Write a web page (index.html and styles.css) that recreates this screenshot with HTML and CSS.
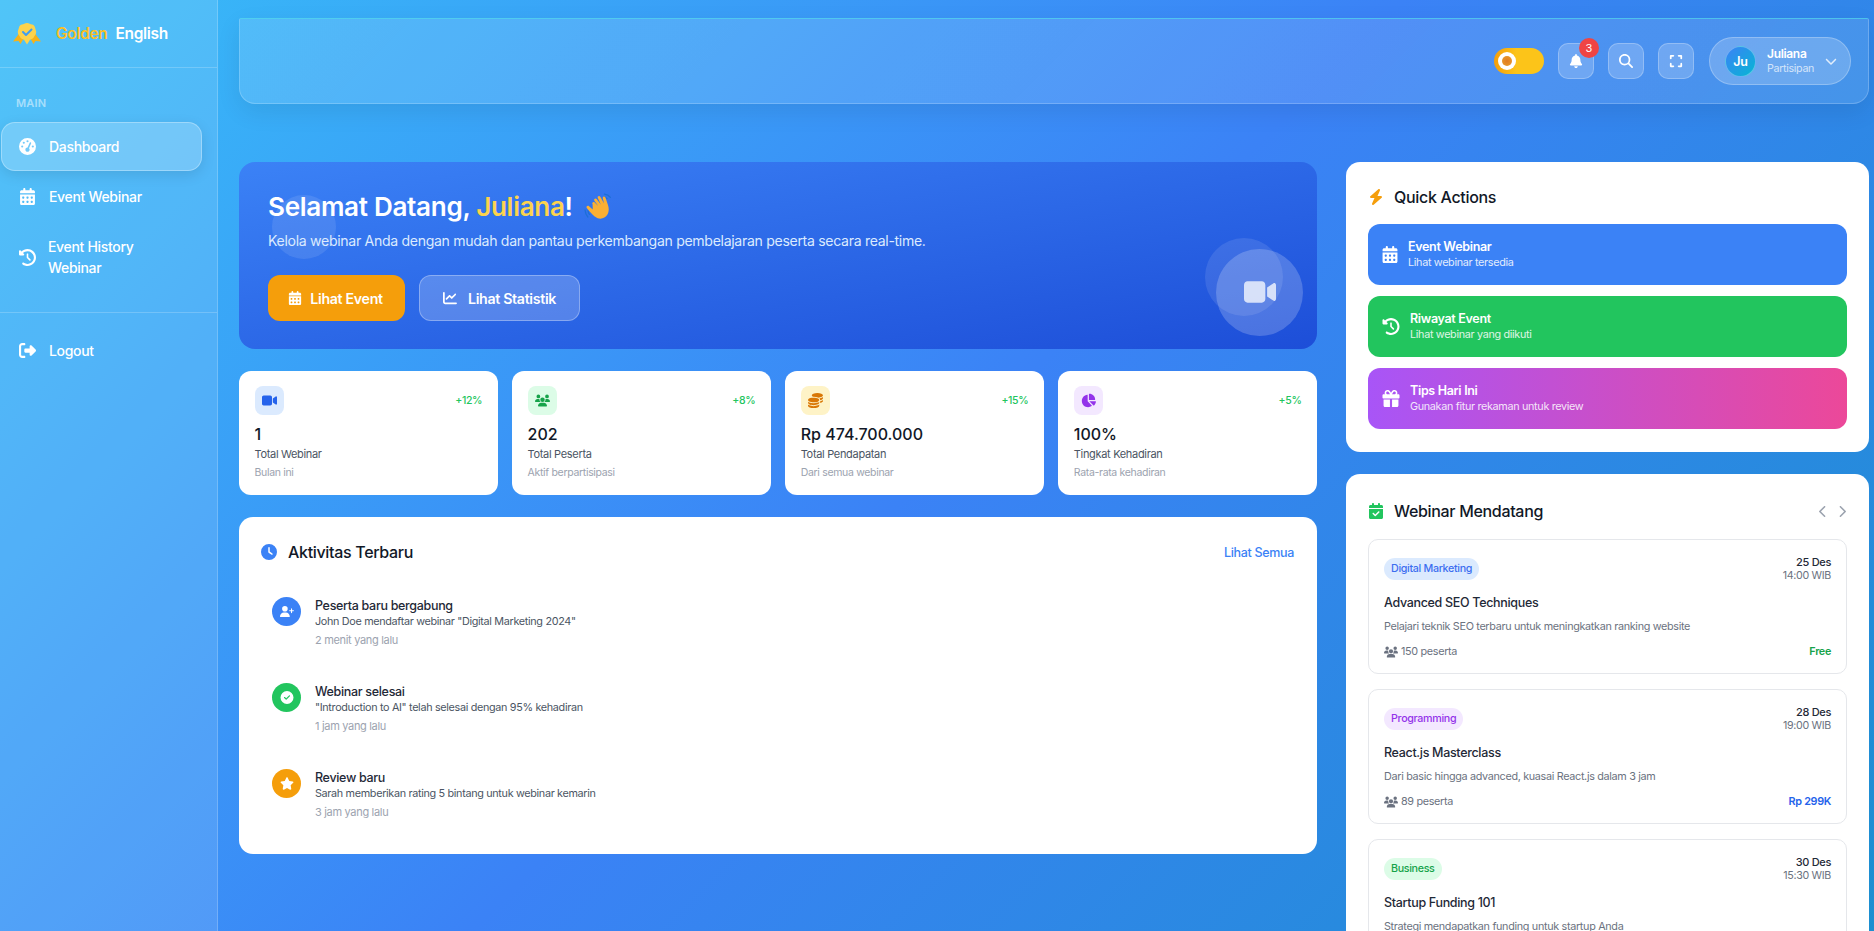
FILE: index.html
```html
<!DOCTYPE html>
<html lang="id">
<head>
    <meta charset="UTF-8">
    <meta name="viewport" content="width=device-width, initial-scale=1.0">
    <title>Golden English - Dashboard</title>
    <link rel="stylesheet" href="styles.css">
</head>
<body>
    <svg class="sprite" xmlns="http://www.w3.org/2000/svg">
        <symbol id="i-gauge" viewBox="0 0 512 512"><path d="M0 256a256 256 0 1 1 512 0A256 256 0 1 1 0 256zM288 96a32 32 0 1 0 -64 0 32 32 0 1 0 64 0zM256 416c35.3 0 64-28.7 64-64c0-17.4-6.9-33.1-18.1-44.6L366 161.7c5.3-12.1-.2-26.3-12.3-31.6s-26.3 .2-31.6 12.3L257.9 288c-.6 0-1.3 0-1.9 0c-35.3 0-64 28.7-64 64s28.7 64 64 64zM176 144a32 32 0 1 0 -64 0 32 32 0 1 0 64 0zM96 288a32 32 0 1 0 0-64 32 32 0 1 0 0 64zm352-32a32 32 0 1 0 -64 0 32 32 0 1 0 64 0z"/></symbol>
        <symbol id="i-calendar" viewBox="0 0 448 512"><path d="M128 0c17.7 0 32 14.3 32 32V64H288V32c0-17.7 14.3-32 32-32s32 14.3 32 32V64h48c26.5 0 48 21.5 48 48v48H0V112C0 85.5 21.5 64 48 64H96V32c0-17.7 14.3-32 32-32zM0 192H448V464c0 26.5-21.5 48-48 48H48c-26.5 0-48-21.5-48-48V192zm64 80v32c0 8.8 7.2 16 16 16h32c8.8 0 16-7.2 16-16V272c0-8.8-7.2-16-16-16H80c-8.8 0-16 7.2-16 16zm128 0v32c0 8.8 7.2 16 16 16h32c8.8 0 16-7.2 16-16V272c0-8.8-7.2-16-16-16H208c-8.8 0-16 7.2-16 16zm144-16c-8.8 0-16 7.2-16 16v32c0 8.8 7.2 16 16 16h32c8.8 0 16-7.2 16-16V272c0-8.8-7.2-16-16-16H336zM64 400v32c0 8.8 7.2 16 16 16h32c8.8 0 16-7.2 16-16V400c0-8.8-7.2-16-16-16H80c-8.8 0-16 7.2-16 16zm144-16c-8.8 0-16 7.2-16 16v32c0 8.8 7.2 16 16 16h32c8.8 0 16-7.2 16-16V400c0-8.8-7.2-16-16-16H208zm112 16v32c0 8.8 7.2 16 16 16h32c8.8 0 16-7.2 16-16V400c0-8.8-7.2-16-16-16H336c-8.8 0-16 7.2-16 16z"/></symbol>
        <symbol id="i-history" viewBox="0 0 512 512"><path d="M75 75L41 41C25.9 25.9 0 36.6 0 57.9V168c0 13.3 10.7 24 24 24H134.1c21.4 0 32.1-25.9 17-41l-30.8-30.8C155 85.5 203 64 256 64c106 0 192 86 192 192s-86 192-192 192c-40.8 0-78.6-12.7-109.7-34.4c-14.5-10.1-34.4-6.6-44.6 7.9s-6.6 34.4 7.9 44.6C151.2 495 201.7 512 256 512c141.4 0 256-114.6 256-256S397.4 0 256 0C185.3 0 121.3 28.7 75 75zm181 53c-13.3 0-24 10.7-24 24V256c0 6.4 2.5 12.5 7 17l72 72c9.4 9.4 24.6 9.4 33.9 0s9.4-24.6 0-33.9l-65-65V152c0-13.3-10.7-24-24-24z"/></symbol>
        <symbol id="i-logout" viewBox="0 0 512 512"><path d="M377.9 105.9L500.7 228.7c7.2 7.2 11.3 17.1 11.3 27.3s-4.1 20.1-11.3 27.3L377.9 406.1c-6.4 6.4-15 9.9-24 9.9c-18.7 0-33.9-15.2-33.9-33.9l0-62.1-128 0c-17.7 0-32-14.3-32-32l0-64c0-17.7 14.3-32 32-32l128 0 0-62.1c0-18.7 15.2-33.9 33.9-33.9c9 0 17.6 3.6 24 9.9zM160 96L96 96c-17.7 0-32 14.3-32 32l0 256c0 17.7 14.3 32 32 32l64 0c17.7 0 32 14.3 32 32s-14.3 32-32 32l-64 0c-53 0-96-43-96-96L0 128C0 75 43 32 96 32l64 0c17.7 0 32 14.3 32 32s-14.3 32-32 32z"/></symbol>
        <symbol id="i-bell" viewBox="0 0 448 512"><path d="M224 0c-17.7 0-32 14.3-32 32V51.2C119 66 64 130.6 64 208v18.8c0 47-17.3 92.4-48.5 127.6l-7.4 8.3c-8.4 9.4-10.4 22.9-5.3 34.4S19.4 416 32 416H416c12.6 0 24-7.4 29.2-18.9s3.1-25-5.3-34.4l-7.4-8.3C401.3 319.2 384 273.9 384 226.8V208c0-77.4-55-142-128-156.8V32c0-17.7-14.3-32-32-32zm45.3 493.3c12-12 18.7-28.3 18.7-45.3H224 160c0 17 6.7 33.3 18.7 45.3s28.3 18.7 45.3 18.7s33.3-6.7 45.3-18.7z"/></symbol>
        <symbol id="i-search" viewBox="0 0 512 512"><path d="M416 208c0 45.9-14.9 88.3-40 122.7L502.6 457.4c12.5 12.5 12.5 32.8 0 45.3s-32.8 12.5-45.3 0L330.7 376c-34.4 25.2-76.8 40-122.7 40C93.1 416 0 322.9 0 208S93.1 0 208 0S416 93.1 416 208zM208 352a144 144 0 1 0 0-288 144 144 0 1 0 0 288z"/></symbol>
        <symbol id="i-expand" viewBox="0 0 448 512"><path d="M32 32C14.3 32 0 46.3 0 64v96c0 17.7 14.3 32 32 32s32-14.3 32-32V96h64c17.7 0 32-14.3 32-32s-14.3-32-32-32H32zM64 352c0-17.7-14.3-32-32-32s-32 14.3-32 32v96c0 17.7 14.3 32 32 32h96c17.7 0 32-14.3 32-32s-14.3-32-32-32H64V352zM320 32c-17.7 0-32 14.3-32 32s14.3 32 32 32h64v64c0 17.7 14.3 32 32 32s32-14.3 32-32V64c0-17.7-14.3-32-32-32H320zM448 352c0-17.7-14.3-32-32-32s-32 14.3-32 32v64H320c-17.7 0-32 14.3-32 32s14.3 32 32 32h96c17.7 0 32-14.3 32-32V352z"/></symbol>
        <symbol id="i-down" viewBox="0 0 512 512"><path d="M233.4 406.6c12.5 12.5 32.8 12.5 45.3 0l192-192c12.5-12.5 12.5-32.8 0-45.3s-32.8-12.5-45.3 0L256 338.7 86.6 169.4c-12.5-12.5-32.8-12.5-45.3 0s-12.5 32.8 0 45.3l192 192z"/></symbol>
        <symbol id="i-left" viewBox="0 0 320 512"><path d="M9.4 233.4c-12.5 12.5-12.5 32.8 0 45.3l192 192c12.5 12.5 32.8 12.5 45.3 0s12.5-32.8 0-45.3L77.3 256 246.6 86.6c12.5-12.5 12.5-32.8 0-45.3s-32.8-12.5-45.3 0l-192 192z"/></symbol>
        <symbol id="i-right" viewBox="0 0 320 512"><path d="M310.6 233.4c12.5 12.5 12.5 32.8 0 45.3l-192 192c-12.5 12.5-32.8 12.5-45.3 0s-12.5-32.8 0-45.3L242.7 256 73.4 86.6c-12.5-12.5-12.5-32.8 0-45.3s32.8-12.5 45.3 0l192 192z"/></symbol>
        <symbol id="i-chart" viewBox="0 0 512 512"><path d="M64 64c0-17.7-14.3-32-32-32S0 46.3 0 64V400c0 44.2 35.8 80 80 80H480c17.7 0 32-14.3 32-32s-14.3-32-32-32H80c-8.8 0-16-7.2-16-16V64zm406.6 86.6c12.5-12.5 12.5-32.8 0-45.3s-32.8-12.5-45.3 0L320 210.7l-57.4-57.4c-12.5-12.5-32.8-12.5-45.3 0l-112 112c-12.5 12.5-12.5 32.8 0 45.3s32.8 12.5 45.3 0L240 221.3l57.4 57.4c12.5 12.5 32.8 12.5 45.3 0l128-128z"/></symbol>
        <symbol id="i-video" viewBox="0 0 576 512"><path d="M0 128C0 92.7 28.7 64 64 64H320c35.3 0 64 28.7 64 64V384c0 35.3-28.7 64-64 64H64c-35.3 0-64-28.7-64-64V128zM559.1 99.8c10.4 5.6 16.9 16.4 16.9 28.2V384c0 11.8-6.5 22.6-16.9 28.2s-23 5-32.9-1.6l-96-64L416 337.1V320 192 174.9l14.2-9.5 96-64c9.8-6.5 22.4-7.2 32.9-1.6z"/></symbol>
        <symbol id="i-users" viewBox="0 0 640 512"><path d="M144 0a80 80 0 1 1 0 160A80 80 0 1 1 144 0zM512 0a80 80 0 1 1 0 160A80 80 0 1 1 512 0zM0 298.7C0 239.8 47.8 192 106.7 192h42.7c15.9 0 31 3.5 44.6 9.7c-1.3 7.2-1.9 14.7-1.9 22.3c0 38.2 16.8 72.5 43.3 96c-.2 0-.4 0-.7 0H21.3C9.6 320 0 310.4 0 298.7zM405.3 320c-.2 0-.4 0-.7 0c26.6-23.5 43.3-57.8 43.3-96c0-7.6-.7-15-1.9-22.3c13.6-6.3 28.7-9.7 44.6-9.7h42.7C592.2 192 640 239.8 640 298.7c0 11.8-9.6 21.3-21.3 21.3H405.3zM224 224a96 96 0 1 1 192 0 96 96 0 1 1 -192 0zM128 485.3C128 411.7 187.7 352 261.3 352H378.7C452.3 352 512 411.7 512 485.3c0 14.7-11.9 26.7-26.7 26.7H154.7c-14.7 0-26.7-11.9-26.7-26.7z"/></symbol>
        <symbol id="i-coins" viewBox="0 0 512 512"><path d="M512 80c0 18-14.3 34.6-38.4 48c-29.1 16.1-72.5 27.5-122.3 30.9c-3.7-1.8-7.4-3.5-11.3-5C300.6 137.4 248.2 128 192 128c-8.3 0-16.4 .2-24.5 .6l-1.1-.6C142.3 114.6 128 98 128 80c0-44.2 86-80 192-80S512 35.8 512 80zM160.7 161.1c10.2-.7 20.7-1.1 31.3-1.1c62.2 0 117.4 12.3 152.5 31.4C369.3 204.9 384 221.7 384 240c0 4-.7 7.9-2.1 11.7c-4.6 13.2-17 25.3-35 35.5c0 0 0 0 0 0c-.1 .1-.3 .1-.4 .2l0 0 0 0c-.3 .2-.6 .3-.9 .5c-35 19.4-90.8 32-153.6 32c-59.6 0-112.9-11.3-148.2-29.1c-1.9-.9-3.7-1.9-5.5-2.9C14.3 274.6 0 258 0 240c0-34.8 53.4-64.5 128-75.4c10.5-1.5 21.4-2.7 32.7-3.5zM416 240c0-21.9-10.6-39.9-24.1-53.4c28.3-4.4 54.2-11.4 76.2-20.5c16.3-6.8 31.5-15.2 43.9-25.5V176c0 19.3-16.5 37.1-43.8 50.9c-14.6 7.4-32.4 13.7-52.4 18.5c.1-1.8 .2-3.5 .2-5.3zm-32 96c0 18-14.3 34.6-38.4 48c-1.8 1-3.6 1.9-5.5 2.9C304.9 404.7 251.6 416 192 416c-62.8 0-118.6-12.6-153.6-32C14.3 370.6 0 354 0 336V300.6c12.5 10.3 27.6 18.7 43.9 25.5C83.4 342.6 135.8 352 192 352s108.6-9.4 148.1-25.9c7.8-3.2 15.3-6.9 22.4-10.9c6.1-3.4 11.8-7.2 17.2-11.2c1.5-1.1 2.9-2.3 4.3-3.4V304v5.7V336zm32 0V304 278.1c19-4.2 36.5-9.5 52.1-16c16.3-6.8 31.5-15.2 43.9-25.5V272c0 10.5-5 21-14.9 30.9c-16.3 16.3-45 29.7-81.3 38.4c.1-1.7 .2-3.5 .2-5.3zM192 448c56.2 0 108.6-9.4 148.1-25.9c16.3-6.8 31.5-15.2 43.9-25.5V432c0 44.2-86 80-192 80S0 476.2 0 432V396.6c12.5 10.3 27.6 18.7 43.9 25.5C83.4 438.6 135.8 448 192 448z"/></symbol>
        <symbol id="i-pie" viewBox="0 0 576 512"><path d="M304 240V16.6c0-9 7-16.6 16-16.6C443.7 0 544 100.3 544 224c0 9-7.6 16-16.6 16H304zM32 272C32 150.7 122.1 50.3 239 34.3c9.2-1.3 17 6.1 17 15.4V288L412.5 444.5c6.7 6.7 6.2 17.7-1.5 23.1C371.8 495.6 323.8 512 272 512C139.5 512 32 404.6 32 272zm526.4 16c9.3 0 16.6 7.8 15.4 17c-7.7 55.9-34.6 105.6-73.9 142.3c-6 5.6-15.4 5.2-21.2-.7L320 288H558.4z"/></symbol>
        <symbol id="i-clock" viewBox="0 0 512 512"><path d="M256 0a256 256 0 1 1 0 512A256 256 0 1 1 256 0zM232 120V256c0 8 4 15.5 10.7 20l96 64c11 7.4 25.9 4.4 33.3-6.7s4.4-25.9-6.7-33.3L280 243.2V120c0-13.3-10.7-24-24-24s-24 10.7-24 24z"/></symbol>
        <symbol id="i-userplus" viewBox="0 0 640 512"><path d="M96 128a128 128 0 1 1 256 0A128 128 0 1 1 96 128zM0 482.3C0 383.8 79.8 304 178.3 304h91.4C368.2 304 448 383.8 448 482.3c0 16.4-13.3 29.7-29.7 29.7H29.7C13.3 512 0 498.7 0 482.3zM504 312V248H440c-13.3 0-24-10.7-24-24s10.7-24 24-24h64V136c0-13.3 10.7-24 24-24s24 10.7 24 24v64h64c13.3 0 24 10.7 24 24s-10.7 24-24 24H552v64c0 13.3-10.7 24-24 24s-24-10.7-24-24z"/></symbol>
        <symbol id="i-check" viewBox="0 0 512 512"><path d="M256 512A256 256 0 1 0 256 0a256 256 0 1 0 0 512zM369 209L241 337c-9.4 9.4-24.6 9.4-33.9 0l-64-64c-9.4-9.4-9.4-24.6 0-33.9s24.6-9.4 33.9 0l47 47L335 175c9.4-9.4 24.6-9.4 33.9 0s9.4 24.6 0 33.9z"/></symbol>
        <symbol id="i-star" viewBox="0 0 576 512"><path d="M316.9 18C311.6 7 300.4 0 288.1 0s-23.4 7-28.8 18L195 150.3 51.4 171.5c-12 1.8-22 10.2-25.7 21.7s-.7 24.2 7.9 32.7L137.8 329 113.2 474.7c-2 12 3 24.2 12.9 31.3s23 8 33.8 2.3l128.3-68.5 128.3 68.5c10.8 5.7 23.9 4.9 33.8-2.3s14.9-19.3 12.9-31.3L438.5 329 542.7 225.9c8.6-8.5 11.7-21.2 7.9-32.7s-13.7-19.9-25.7-21.7L381.2 150.3 316.9 18z"/></symbol>
        <symbol id="i-bolt" viewBox="0 0 448 512"><path d="M349.4 44.6c5.9-13.7 1.5-29.7-10.6-38.5s-28.6-8-39.9 1.8l-256 224c-10 8.8-13.6 22.9-8.9 35.3S50.7 288 64 288H175.5L98.6 467.4c-5.9 13.7-1.5 29.7 10.6 38.5s28.6 8 39.9-1.8l256-224c10-8.8 13.6-22.9 8.9-35.3s-16.6-20.7-30-20.7H272.5L349.4 44.6z"/></symbol>
        <symbol id="i-gift" viewBox="0 0 512 512"><path d="M190.5 68.8L225.3 128H224 152c-22.1 0-40-17.9-40-40s17.9-40 40-40h2.2c14.9 0 28.8 7.9 36.3 20.8zM64 88c0 14.4 3.5 28 9.6 40H32c-17.7 0-32 14.3-32 32v64c0 17.7 14.3 32 32 32H480c17.7 0 32-14.3 32-32V160c0-17.7-14.3-32-32-32H438.4c6.1-12 9.6-25.6 9.6-40c0-48.6-39.4-88-88-88h-2.2c-31.9 0-61.5 16.9-77.7 44.4L256 85.5l-24.1-41C215.7 16.9 186.1 0 154.2 0H152C103.4 0 64 39.4 64 88zm336 0c0 22.1-17.9 40-40 40H288h-1.3l34.8-59.2C329.1 55.9 342.9 48 357.8 48H360c22.1 0 40 17.9 40 40zM32 288V464c0 26.5 21.5 48 48 48H224V288H32zM288 512H432c26.5 0 48-21.5 48-48V288H288V512z"/></symbol>
        <symbol id="i-calcheck" viewBox="0 0 448 512"><path d="M128 0c17.7 0 32 14.3 32 32V64H288V32c0-17.7 14.3-32 32-32s32 14.3 32 32V64h48c26.5 0 48 21.5 48 48v48H0V112C0 85.5 21.5 64 48 64H96V32c0-17.7 14.3-32 32-32zM0 192H448V464c0 26.5-21.5 48-48 48H48c-26.5 0-48-21.5-48-48V192zM329 305c9.4-9.4 9.4-24.6 0-33.9s-24.6-9.4-33.9 0l-95 95-47-47c-9.4-9.4-24.6-9.4-33.9 0s-9.4 24.6 0 33.9l64 64c9.4 9.4 24.6 9.4 33.9 0L329 305z"/></symbol>
    </svg>

    <aside class="sidebar">
        <div class="brand">
            <svg class="brand-logo" viewBox="0 0 28 22">
                <path fill="#f5b21a" d="M6.500 10L0 18.500l5.500-.5 2 3 4-7zM21.500 10L28 18.500l-5.500-.5-2 3-4-7z"/>
                <path fill="#fcd34d" d="M14 0c2 0 3.500 1.300 5 1.500 1.500.2 2.800 1.500 3 3 .2 1.500 1.200 2.800 1.200 4.500 0 2-1.500 3.500-2.200 5-.7 1.500-2.500 2.300-4 2.800L14 21.500 11 16.800c-1.500-.5-3.300-1.300-4-2.800-.7-1.500-2.200-3-2.200-5 0-1.700 1-3 1.200-4.500.2-1.500 1.500-2.800 3-3C10.500 1.300 12 0 14 0z"/>
                <path fill="none" stroke="#3f9df2" stroke-width="2" stroke-linecap="round" stroke-linejoin="round" d="M10 9l3 3 5.500-5.500"/>
            </svg>
            <span class="brand-gold">Golden</span>
            <span class="brand-white">English</span>
        </div>
        <div class="nav-title">MAIN</div>
        <nav class="nav">
            <a class="nav-item active"><svg class="nav-icon"><use href="#i-gauge"/></svg><span>Dashboard</span></a>
            <a class="nav-item"><svg class="nav-icon"><use href="#i-calendar"/></svg><span>Event Webinar</span></a>
            <a class="nav-item two-line"><svg class="nav-icon"><use href="#i-history"/></svg><span>Event History<br>Webinar</span></a>
        </nav>
        <div class="nav-bottom">
            <a class="nav-item"><svg class="nav-icon"><use href="#i-logout"/></svg><span>Logout</span></a>
        </div>
    </aside>

    <main class="main">
        <header class="topbar">
            <div class="toggle"><span class="knob"><span class="sun"></span></span></div>
            <button class="top-btn"><svg class="top-icon"><use href="#i-bell"/></svg><span class="badge">3</span></button>
            <button class="top-btn"><svg class="top-icon"><use href="#i-search"/></svg></button>
            <button class="top-btn"><svg class="top-icon"><use href="#i-expand"/></svg></button>
            <div class="user-pill">
                <span class="avatar">Ju</span>
                <span class="user-text"><b>Juliana</b><small>Partisipan</small></span>
                <svg class="user-chevron"><use href="#i-down"/></svg>
            </div>
        </header>

        <div class="content">
            <div class="col-left">
                <section class="hero">
                    <span class="bubble bubble-a"></span>
                    <span class="bubble bubble-b"></span>
                    <span class="bubble bubble-c"></span>
                    <svg class="hero-video"><use href="#i-video"/></svg>
                    <h1>Selamat Datang, <span class="hero-name">Juliana</span>!<svg class="wave" viewBox="0 0 28 28"><path fill="none" stroke="#1d6fd6" stroke-width="1.2" stroke-linecap="round" d="M1 16c.2 2.500 1 4.600 2.600 6.400M3.800 16.500c.1 1.300.5 2.400 1.300 3.400M19 1c2.300.2 4.200 1.200 5.600 3M18.500 3.600c1.200.2 2.200.7 3 1.600"/><path fill="#fbb034" d="M8 10.500c-1-1.300 .8-2.700 2-1.600l3.300 3.300-3.600-5c-1-1.500 1-2.900 2.100-1.500l3.900 5-2.800-6c-.8-1.600 1.400-2.700 2.300-1.200l3.500 6.200-1.200-4.700c-.4-1.700 1.900-2.300 2.500-.7l2.300 6.700c1.100 3.400 1.200 6.200-.4 9.100-2.400 4.200-7.800 5-11.500 2.100-1.800-1.400-5.700-5.600-7.700-8-1.200-1.500.7-3 2-1.900l3.500 3.200z"/></svg></h1>
                    <p>Kelola webinar Anda dengan mudah dan pantau perkembangan pembelajaran peserta secara real-time.</p>
                    <div class="hero-actions">
                        <a class="btn btn-amber"><svg class="btn-icon"><use href="#i-calendar"/></svg>Lihat Event</a>
                        <a class="btn btn-ghost"><svg class="btn-icon"><use href="#i-chart"/></svg>Lihat Statistik</a>
                    </div>
                </section>

                <section class="stats">
                    <div class="stat">
                        <div class="stat-top"><span class="stat-icon bg-blue"><svg class="stat-svg"><use href="#i-video"/></svg></span><span class="stat-trend">+12%</span></div>
                        <div class="stat-value">1</div>
                        <div class="stat-label">Total Webinar</div>
                        <div class="stat-note">Bulan ini</div>
                    </div>
                    <div class="stat">
                        <div class="stat-top"><span class="stat-icon bg-green"><svg class="stat-svg"><use href="#i-users"/></svg></span><span class="stat-trend">+8%</span></div>
                        <div class="stat-value">202</div>
                        <div class="stat-label">Total Peserta</div>
                        <div class="stat-note">Aktif berpartisipasi</div>
                    </div>
                    <div class="stat">
                        <div class="stat-top"><span class="stat-icon bg-amber"><svg class="stat-svg"><use href="#i-coins"/></svg></span><span class="stat-trend">+15%</span></div>
                        <div class="stat-value">Rp 474.700.000</div>
                        <div class="stat-label">Total Pendapatan</div>
                        <div class="stat-note">Dari semua webinar</div>
                    </div>
                    <div class="stat">
                        <div class="stat-top"><span class="stat-icon bg-purple"><svg class="stat-svg"><use href="#i-pie"/></svg></span><span class="stat-trend">+5%</span></div>
                        <div class="stat-value">100%</div>
                        <div class="stat-label">Tingkat Kehadiran</div>
                        <div class="stat-note">Rata-rata kehadiran</div>
                    </div>
                </section>

                <section class="card activity">
                    <div class="card-head">
                        <h2><svg class="head-icon c-blue"><use href="#i-clock"/></svg>Aktivitas Terbaru</h2>
                        <a class="see-all">Lihat Semua</a>
                    </div>
                    <div class="act-list">
                        <div class="act">
                            <span class="act-icon fill-blue"><svg class="act-svg"><use href="#i-userplus"/></svg></span>
                            <div>
                                <div class="act-title">Peserta baru bergabung</div>
                                <div class="act-desc">John Doe mendaftar webinar "Digital Marketing 2024"</div>
                                <div class="act-time">2 menit yang lalu</div>
                            </div>
                        </div>
                        <div class="act">
                            <span class="act-icon fill-green"><svg class="act-svg"><use href="#i-check"/></svg></span>
                            <div>
                                <div class="act-title">Webinar selesai</div>
                                <div class="act-desc">"Introduction to AI" telah selesai dengan 95% kehadiran</div>
                                <div class="act-time">1 jam yang lalu</div>
                            </div>
                        </div>
                        <div class="act">
                            <span class="act-icon fill-amber"><svg class="act-svg"><use href="#i-star"/></svg></span>
                            <div>
                                <div class="act-title">Review baru</div>
                                <div class="act-desc">Sarah memberikan rating 5 bintang untuk webinar kemarin</div>
                                <div class="act-time">3 jam yang lalu</div>
                            </div>
                        </div>
                    </div>
                </section>
            </div>

            <div class="col-right">
                <section class="card quick">
                    <h2><svg class="head-icon c-amber"><use href="#i-bolt"/></svg>Quick Actions</h2>
                    <a class="qa qa-blue"><svg class="qa-icon"><use href="#i-calendar"/></svg><span><b>Event Webinar</b><small>Lihat webinar tersedia</small></span></a>
                    <a class="qa qa-green"><svg class="qa-icon wide"><use href="#i-history"/></svg><span><b>Riwayat Event</b><small>Lihat webinar yang diikuti</small></span></a>
                    <a class="qa qa-pink"><svg class="qa-icon wide"><use href="#i-gift"/></svg><span><b>Tips Hari Ini</b><small>Gunakan fitur rekaman untuk review</small></span></a>
                </section>

                <section class="card upcoming">
                    <div class="card-head">
                        <h2><svg class="head-icon c-green"><use href="#i-calcheck"/></svg>Webinar Mendatang</h2>
                        <div class="pager"><svg class="pager-icon"><use href="#i-left"/></svg><svg class="pager-icon"><use href="#i-right"/></svg></div>
                    </div>
                    <div class="web">
                        <div class="web-top">
                            <span class="tag tag-blue">Digital Marketing</span>
                            <div class="web-date"><b>25 Des</b><small>14:00 WIB</small></div>
                        </div>
                        <h3>Advanced SEO Techniques</h3>
                        <p>Pelajari teknik SEO terbaru untuk meningkatkan ranking website</p>
                        <div class="web-foot"><span class="web-people"><svg class="people-icon"><use href="#i-users"/></svg>150 peserta</span><span class="price-free">Free</span></div>
                    </div>
                    <div class="web">
                        <div class="web-top">
                            <span class="tag tag-purple">Programming</span>
                            <div class="web-date"><b>28 Des</b><small>19:00 WIB</small></div>
                        </div>
                        <h3>React.js Masterclass</h3>
                        <p>Dari basic hingga advanced, kuasai React.js dalam 3 jam</p>
                        <div class="web-foot"><span class="web-people"><svg class="people-icon"><use href="#i-users"/></svg>89 peserta</span><span class="price-paid">Rp 299K</span></div>
                    </div>
                    <div class="web">
                        <div class="web-top">
                            <span class="tag tag-green">Business</span>
                            <div class="web-date"><b>30 Des</b><small>15:30 WIB</small></div>
                        </div>
                        <h3>Startup Funding 101</h3>
                        <p>Strategi mendapatkan funding untuk startup Anda</p>
                    </div>
                </section>
            </div>
        </div>
    </main>
</body>
</html>
```
FILE: styles.css
```css
* {
    box-sizing: border-box;
}
html, body {
    height: 100%;
}
body {
    margin: 0;
    display: flex;
    overflow: hidden;
    font-family: "Inter", "Open Sans", sans-serif;
    letter-spacing: -0.02em;
    color: #1f2937;
    background: linear-gradient(135deg, #38bdf8 0%, #3b82f6 50%, #1c8fd0 100%);
}
svg {
    fill: currentColor;
}
.sprite {
    display: none;
}
h1, h2, h3, p {
    margin: 0;
}
small {
    display: block;
}

/* sidebar */
.sidebar {
    width: 218px;
    flex-shrink: 0;
    color: #fff;
    background: rgba(255, 255, 255, 0.12);
    border-right: 1px solid rgba(255, 255, 255, 0.2);
}
.brand {
    height: 68px;
    padding: 0 0 0 13px;
    display: flex;
    align-items: center;
    font-size: 15.5px;
    font-weight: 600;
    border-bottom: 1px solid rgba(255, 255, 255, 0.2);
}
.brand-logo {
    width: 28px;
    height: 22px;
    margin-right: 15px;
    margin-top: 1px;
}
.brand-gold {
    color: #fbbf24;
    margin-right: 8px;
}
.nav-title {
    padding: 28px 0 0 16px;
    height: 54px;
    font-size: 11px;
    font-weight: 600;
    letter-spacing: 0.02em;
    color: rgba(255, 255, 255, 0.5);
}
.nav {
    padding: 0 15px 0 1px;
}
.nav-item {
    display: flex;
    align-items: center;
    height: 49px;
    padding-left: 17px;
    gap: 13px;
    font-size: 14px;
    font-weight: 500;
    color: #fff;
    border: 1px solid transparent;
}
.nav-item.active {
    margin-bottom: 1px;
    background: rgba(255, 255, 255, 0.2);
    border-color: rgba(255, 255, 255, 0.3);
    border-radius: 14px;
    box-shadow: 0 4px 14px rgba(0, 0, 0, 0.1);
}
.nav-icon {
    width: 17px;
    height: 17px;
    flex-shrink: 0;
}
.nav-item.two-line {
    height: 68px;
    margin-top: 2px;
    line-height: 21px;
    gap: 12px;
}
.nav-bottom {
    margin-top: 21px;
    padding: 13px 15px 0 1px;
    border-top: 1px solid rgba(255, 255, 255, 0.2);
}

/* top bar */
.main {
    flex: 1;
    min-width: 0;
    padding: 18px 5px 0 21px;
}
.topbar {
    height: 86px;
    display: flex;
    align-items: center;
    justify-content: flex-end;
    padding-right: 17px;
    border: 1px solid rgba(255, 255, 255, 0.2);
    border-top-color: rgba(80, 215, 235, 0.7);
    border-radius: 2px 2px 16px 16px;
    background: linear-gradient(135deg, rgba(255, 255, 255, 0.13), rgba(255, 255, 255, 0.11));
    box-shadow: 0 8px 24px rgba(0, 0, 0, 0.08);
}
.toggle {
    width: 50px;
    height: 26px;
    margin-right: 14px;
    padding: 4px;
    border-radius: 13px;
    background: linear-gradient(90deg, #f59e0b, #fcc419 45%);
}
.knob {
    width: 18px;
    height: 18px;
    display: flex;
    align-items: center;
    justify-content: center;
    border-radius: 50%;
    background: #fff;
}
.sun {
    width: 10px;
    height: 10px;
    border-radius: 50%;
    background: radial-gradient(#e07b22, #eaa02c);
}
.top-btn {
    position: relative;
    width: 36px;
    height: 36px;
    margin-right: 14px;
    padding: 0;
    display: flex;
    align-items: center;
    justify-content: center;
    color: #fff;
    background: rgba(255, 255, 255, 0.2);
    border: 1px solid rgba(255, 255, 255, 0.25);
    border-radius: 10px;
}
.top-icon {
    width: 14px;
    height: 14px;
}
.badge {
    position: absolute;
    top: -6px;
    right: -6px;
    width: 20px;
    height: 20px;
    border-radius: 50%;
    background: #ef4444;
    color: #fff;
    font-size: 11.5px;
    font-weight: 500;
    line-height: 20px;
    text-align: center;
}
.user-pill {
    width: 142px;
    height: 48px;
    margin-left: 1px;
    padding-left: 15px;
    display: flex;
    align-items: center;
    color: #fff;
    background: rgba(255, 255, 255, 0.2);
    border: 1px solid rgba(255, 255, 255, 0.25);
    border-radius: 24px;
}
.avatar {
    width: 31px;
    height: 31px;
    flex-shrink: 0;
    border-radius: 50%;
    border: 1px solid rgba(255, 255, 255, 0.3);
    background: linear-gradient(135deg, #3b82f6, #06b6d4);
    text-align: center;
    line-height: 29px;
    font-size: 12.5px;
    font-weight: 600;
}
.user-text {
    margin-left: 11px;
    width: 54px;
    flex-shrink: 0;
}
.user-text b {
    display: block;
    font-size: 12px;
    font-weight: 600;
    line-height: 15px;
}
.user-text small {
    font-size: 10.7px;
    line-height: 15px;
    opacity: 0.7;
}
.user-chevron {
    width: 12px;
    height: 12px;
    margin-left: 4px;
    opacity: 0.8;
}

/* content */
.content {
    display: grid;
    grid-template-columns: 1078px 523px;
    column-gap: 29px;
    margin-top: 58px;
    align-items: start;
}
.col-left, .col-right {
    display: flex;
    flex-direction: column;
    gap: 22px;
}
.hero {
    position: relative;
    height: 187px;
    padding: 28px 29px 0;
    color: #fff;
    border-radius: 16px;
    background: linear-gradient(to bottom right, #3b82f6, #1d4ed8);
    overflow: hidden;
}
.hero h1 {
    position: relative;
    height: 34px;
    font-size: 26.1px;
    line-height: 34px;
    font-weight: 600;
    white-space: nowrap;
}
.hero-name {
    color: #fcd34d;
}
.wave {
    width: 30px;
    height: 30px;
    margin-left: 11px;
    vertical-align: -7px;
}
.hero p {
    position: relative;
    margin-top: 7px;
    font-size: 14.1px;
    line-height: 20px;
    color: #dbeafe;
}
.bubble {
    position: absolute;
    border-radius: 50%;
    background: rgba(255, 255, 255, 0.1);
}
.bubble-a {
    left: 33px;
    top: 33px;
    width: 64px;
    height: 64px;
}
.bubble-b {
    left: 966px;
    top: 76px;
    width: 78px;
    height: 78px;
}
.bubble-c {
    left: 977px;
    top: 87px;
    width: 87px;
    height: 87px;
    background: rgba(255, 255, 255, 0.2);
}
.hero-video {
    position: absolute;
    left: 1005px;
    top: 114px;
    width: 32px;
    height: 32px;
    color: rgba(255, 255, 255, 0.75);
}
.hero-actions {
    position: relative;
    display: flex;
    gap: 14px;
    margin-top: 24px;
}
.btn {
    height: 46px;
    display: flex;
    align-items: center;
    justify-content: center;
    gap: 8px;
    font-size: 14.2px;
    font-weight: 600;
    border-radius: 12px;
}
.btn-amber {
    width: 137px;
    padding-right: 2px;
    background: #f59e0b;
}
.btn-ghost {
    width: 161px;
    gap: 11px;
    background: rgba(255, 255, 255, 0.2);
    border: 1px solid rgba(255, 255, 255, 0.3);
}
.btn-icon {
    width: 14px;
    height: 14px;
}

/* stat cards */
.stats {
    display: grid;
    grid-template-columns: repeat(4, 1fr);
    gap: 14.400px;
}
.stat {
    height: 124px;
    padding: 14px 14.500px;
    background: #fff;
    border-radius: 12px;
    border: 1px solid rgba(255, 255, 255, 0.4);
}
.stat-top {
    display: flex;
    align-items: center;
    justify-content: space-between;
}
.stat-icon {
    width: 29px;
    height: 29px;
    display: flex;
    align-items: center;
    justify-content: center;
    border-radius: 8px;
}
.stat-svg {
    width: 15px;
    height: 15px;
}
.bg-blue { background: #dbeafe; color: #2563eb; }
.bg-green { background: #dcfce7; color: #16a34a; }
.bg-amber { background: #fef3c7; color: #d97706; }
.bg-purple { background: #f3e8ff; color: #9333ea; }
.stat-trend {
    font-size: 10.5px;
    font-weight: 500;
    color: #22c55e;
}
.stat-value {
    margin-top: 9px;
    font-size: 16px;
    line-height: 20px;
    font-weight: 500;
    letter-spacing: 0;
    color: #111827;
}
.stat-label {
    margin-top: 2px;
    font-size: 11px;
    line-height: 16px;
    color: #4b5563;
}
.stat-note {
    margin-top: 3px;
    font-size: 10.5px;
    line-height: 15px;
    color: #9ca3af;
}

/* cards */
.card {
    background: #fff;
    border-radius: 14px;
    border: 1px solid rgba(255, 255, 255, 0.4);
}
.card h2 {
    display: flex;
    align-items: center;
    font-size: 16px;
    line-height: 24px;
    font-weight: 500;
    color: #111827;
}
.head-icon {
    width: 16px;
    height: 16px;
    margin-right: 10px;
}
.c-blue { color: #3b82f6; }
.c-amber { color: #f59e0b; }
.c-green { color: #22c55e; }
.card-head {
    display: flex;
    align-items: center;
    justify-content: space-between;
}
.activity {
    height: 337px;
    padding: 22px 22px 0 21px;
}
.activity h2 .head-icon {
    margin-right: 11px;
}
.see-all {
    font-size: 12.5px;
    font-weight: 500;
    color: #3b82f6;
}
.act-list {
    margin-top: 21px;
    padding-left: 11px;
}
.act {
    height: 86px;
    display: flex;
    gap: 14px;
    padding-top: 12px;
}
.act-icon {
    width: 29px;
    height: 29px;
    flex-shrink: 0;
    display: flex;
    align-items: center;
    justify-content: center;
    color: #fff;
    border-radius: 50%;
}
.act-svg {
    width: 14px;
    height: 13px;
}
.fill-blue { background: #3b82f6; }
.fill-green { background: #22c55e; }
.fill-amber { background: #f59e0b; }
.act-title {
    font-size: 12.5px;
    line-height: 18px;
    font-weight: 500;
    color: #1f2937;
}
.act-desc {
    font-size: 10.8px;
    line-height: 14px;
    color: #4b5563;
}
.act-time {
    margin-top: 4px;
    font-size: 11px;
    line-height: 14px;
    color: #9ca3af;
}

/* right column */
.quick {
    height: 290px;
    padding: 22px 21px 0;
}
.quick h2 {
    margin-bottom: 15px;
}
.qa {
    height: 61px;
    margin-bottom: 11px;
    padding-left: 14px;
    display: flex;
    align-items: center;
    gap: 10px;
    color: #fff;
    border-radius: 12px;
}
.qa-icon {
    width: 16px;
    height: 17px;
    flex-shrink: 0;
}
.qa-icon.wide {
    width: 18px;
}
.qa b {
    display: block;
    font-size: 12.5px;
    line-height: 16px;
    font-weight: 600;
}
.qa small {
    font-size: 10.8px;
    line-height: 15px;
    opacity: 0.85;
}
.qa-blue { background: #3b82f6; }
.qa-green { background: #22c55e; }
.qa-pink { background: linear-gradient(90deg, #a855f7, #ec4899); }
.upcoming {
    padding: 24px 21px 0;
}
.pager {
    display: flex;
    gap: 11px;
    padding-right: 1px;
    color: #9ca3af;
}
.pager-icon {
    width: 8px;
    height: 13px;
}
.web {
    height: 135px;
    margin-top: 15px;
    padding: 15px;
    border: 1px solid #e5e7eb;
    border-radius: 10px;
}
.upcoming .card-head + .web {
    margin-top: 16px;
}
.web-top {
    display: flex;
    align-items: flex-start;
    justify-content: space-between;
}
.tag {
    margin-top: 3px;
    padding: 0 7px;
    height: 22px;
    line-height: 21px;
    font-size: 10.7px;
    font-weight: 500;
    border-radius: 11px;
}
.tag-blue { background: #dbeafe; color: #3b6ef0; }
.tag-purple { background: #f3e8ff; color: #9333ea; }
.tag-green { background: #dcfce7; color: #16a34a; }
.web-date {
    text-align: right;
}
.web-date b {
    display: block;
    font-size: 11px;
    line-height: 14px;
    font-weight: 500;
    color: #1f2937;
}
.web-date small {
    font-size: 10.7px;
    line-height: 14px;
    color: #6b7280;
}
.web h3 {
    margin-top: 11px;
    font-size: 12.5px;
    line-height: 17px;
    font-weight: 500;
    color: #1f2937;
}
.web p {
    margin-top: 8.500px;
    font-size: 10.8px;
    line-height: 14px;
    color: #6b7280;
}
.web-foot {
    margin-top: 11.500px;
    display: flex;
    align-items: center;
    justify-content: space-between;
    font-size: 10.8px;
    line-height: 14px;
}
.web-people {
    display: flex;
    align-items: center;
    gap: 3px;
    color: #6b7280;
}
.people-icon {
    width: 14px;
    height: 12px;
}
.price-free {
    font-weight: 600;
    color: #16a34a;
}
.price-paid {
    font-weight: 600;
    color: #2563eb;
}
```
